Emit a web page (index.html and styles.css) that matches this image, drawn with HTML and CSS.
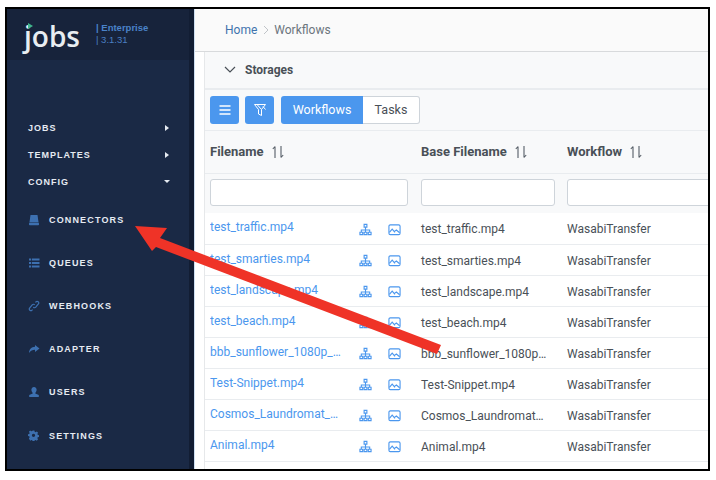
FILE: index.html
```html
<!DOCTYPE html>
<html lang="en">
<head>
<meta charset="utf-8">
<title>Workflows</title>
<link rel="stylesheet" href="styles.css">
</head>
<body>
<div class="frame">
  <aside class="sidebar">
    <div class="brand">
      <div class="logo"><span class="logo-mark"></span>jobs</div>
      <div class="edition"><div class="ed-name">| Enterprise</div><div class="ed-ver">| 3.1.31</div></div>
    </div>
    <nav class="nav">
      <div class="group"><span>JOBS</span><i class="caret-r"></i></div>
      <div class="group"><span>TEMPLATES</span><i class="caret-r"></i></div>
      <div class="group"><span>CONFIG</span><i class="caret-d"></i></div>
      <div class="subs">
        <div class="sub"><svg class="sicon" viewBox="0 0 12 12"><path d="M2.500 1h7l1 7h-9z"/><rect x="1" y="8.600" width="10" height="2.600" rx=".8"/></svg><span>CONNECTORS</span></div>
        <div class="sub"><svg class="sicon" viewBox="0 0 12 12"><path d="M1 1.500h2.200v2H1zM4 1.500h7.500v2H4zM1 5h2.200v2H1zM4 5h7.500v2H4zM1 8.500h2.200v2H1zM4 8.500h7.500v2H4z"/></svg><span>QUEUES</span></div>
        <div class="sub"><svg class="sicon line" viewBox="0 0 12 12"><path d="M4.500 9.500 4 10.200a1.600 1.600 0 0 1-2.400-2.100L4.200 4.800a1.600 1.600 0 0 1 2.500.1M7.500 2.500 8 1.800a1.600 1.600 0 0 1 2.400 2.100L7.800 7.200a1.600 1.600 0 0 1-2.500-.1"/></svg><span>WEBHOOKS</span></div>
        <div class="sub"><svg class="sicon" viewBox="0 0 12 12"><path d="M7 2l4.500 3.500L7 9V6.800C4.500 6.800 2.500 7.500 1 10c.2-3.800 2.500-6 6-6.200z"/></svg><span>ADAPTER</span></div>
        <div class="sub"><svg class="sicon" viewBox="0 0 12 12"><path d="M6 1a2.600 2.600 0 0 1 2.600 3c-.2 1.400-.8 2.400-1.300 2.800v.8l3.500 1.500V11H1.200V9.100l3.500-1.500v-.8C4.200 6.400 3.600 5.400 3.400 4A2.600 2.600 0 0 1 6 1z"/></svg><span>USERS</span></div>
        <div class="sub"><svg class="sicon gear" viewBox="0 0 12 12"><path fill-rule="evenodd" d="M5 .5h2l.3 1.500 1 .4 1.300-.8L11 3l-.8 1.300.4 1 1.400.3v2l-1.400.3-.4 1 .8 1.300-1.400 1.400-1.300-.8-1 .4-.3 1.300H5l-.3-1.300-1-.4-1.300.8L1 9.200l.8-1.300-.4-1L0 6.600v-2l1.400-.3.4-1L1 2 2.400.6l1.300.8 1-.4zM6 4a1.800 1.800 0 1 0 0 3.600A1.800 1.800 0 0 0 6 4z"/></svg><span>SETTINGS</span></div>
      </div>
    </nav>
  </aside>
  <main class="main">
    <div class="crumbs"><a class="crumb-link">Home</a><svg class="crumb-sep" viewBox="0 0 6 10"><path d="M1 1l4 4-4 4"/></svg><span>Workflows</span></div>
    <div class="content">
      <div class="panel"><svg class="chev" viewBox="0 0 12 8"><path d="M1 1l5 5 5-5"/></svg><span>Storages</span></div>
      <div class="toolbar">
        <button class="btn"><svg class="bicon" viewBox="0 0 14 14"><path d="M1.500 3h11M1.500 7h11M1.500 11h11"/></svg></button>
        <button class="btn"><svg class="bicon thin" viewBox="0 0 14 14"><path d="M1.500 1.500h11L8.500 6.500V12.500L5.500 11V6.500zM4 1.500l4.500 5M10 3.500l2.500 3"/></svg></button>
        <div class="seg"><span class="seg-on">Workflows</span><span class="seg-off">Tasks</span></div>
      </div>
      <table class="grid">
        <colgroup><col class="c1"><col class="c2"><col class="c3"></colgroup>
        <thead>
          <tr class="head">
            <th>Filename<svg class="sort" viewBox="0 0 14 14"><path d="M4 13V1.500M4 1.500 1.800 4M10 1v11.500M10 12.500 12.200 10"/></svg></th>
            <th>Base Filename<svg class="sort" viewBox="0 0 14 14"><path d="M4 13V1.500M4 1.500 1.800 4M10 1v11.500M10 12.500 12.200 10"/></svg></th>
            <th>Workflow<svg class="sort" viewBox="0 0 14 14"><path d="M4 13V1.500M4 1.500 1.800 4M10 1v11.500M10 12.500 12.200 10"/></svg></th>
          </tr>
          <tr class="filters">
            <th><input class="finput" aria-label="Filename"></th>
            <th><input class="finput" aria-label="Base Filename"></th>
            <th><input class="finput wide" aria-label="Workflow"></th>
          </tr>
        </thead>
        <tbody id="rows"></tbody>
      </table>
    </div>
  </main>
  <svg class="arrow" viewBox="0 0 716 480"><path d="M135 226 167 228 160 238 441 345 437 354 156 247 152 251z"/></svg>
</div>
<template id="row">
  <tr>
    <td><div class="fcell"><a class="flink"></a><svg class="ticon" viewBox="0 0 14 14"><path d="M5.500 1.500h3v3h-3zM7 4.500v3M2.500 10V7.500h9V10M7 7.500V10M1 10h3v2.500H1zM5.500 10h3v2.500h-3zM10 10h3v2.500h-3z"/></svg><svg class="ticon gap" viewBox="0 0 14 14"><rect x="1" y="2" width="12" height="10.500" rx="1.500"/><path d="M1.500 10l3-3.500 3 3.500M7 9l2-1.500 3.500 3"/></svg></div></td>
    <td class="base"></td>
    <td class="wf">WasabiTransfer</td>
  </tr>
</template>
<script src="rows.js"></script>
</body>
</html>
```
FILE: rows.js
```js
var data = [
  "test_traffic.mp4",
  "test_smarties.mp4",
  "test_landscape.mp4",
  "test_beach.mp4",
  "bbb_sunflower_1080p_H264.mp4",
  "Test-Snippet.mp4",
  "Cosmos_Laundromat_WEB.mp4",
  "Animal.mp4"
];
var body = document.getElementById("rows");
var tpl = document.getElementById("row");
data.forEach(function (name) {
  var r = tpl.content.cloneNode(true);
  r.querySelector(".flink").textContent = name;
  r.querySelector(".base").textContent = name;
  body.appendChild(r);
});
```
FILE: styles.css
```css
* { box-sizing: border-box; }
html, body { margin: 0; height: 100%; background: #fff; overflow: hidden; }
body { padding: 7px 6px 9px 5px; font-family: "Liberation Sans", Arial, sans-serif; }
.frame { position: relative; display: flex; width: 705px; height: 464px; border: 2px solid #000; overflow: hidden; background: #fff; }
.sidebar { width: 187px; flex: none; background: #1a2945; border-right: 5px solid #121d33; }
.brand { height: 51px; background: #17233b; display: flex; padding: 11px 0 0 17px; }
.logo { position: relative; color: #e8edf1; font: 600 28px/32px "Open Sans", sans-serif; width: 72px; }
.logo-mark { position: absolute; left: 4px; top: 3px; width: 0; height: 0; border-left: 5px solid #3fb58c; border-top: 3.500px solid transparent; border-bottom: 3.500px solid transparent; }
.edition { font-size: 9.500px; line-height: 12px; color: #4a7fc4; padding-top: 2px; }
.ed-name { font-weight: 700; color: #4a82c9; }
.nav { padding: 0 0 0 21px; color: #e6ebf2; font-size: 9px; font-weight: 700; letter-spacing: 1px; }
.group { height: 27px; display: flex; align-items: center; justify-content: space-between; padding-right: 20px; }
.group:first-child { margin-top: 54px; }
.caret-r { width: 0; height: 0; border-left: 4px solid #e6ebf2; border-top: 3px solid transparent; border-bottom: 3px solid transparent; }
.caret-d { width: 0; height: 0; border-top: 3px solid #e6ebf2; border-left: 3.500px solid transparent; border-right: 3.500px solid transparent; margin-right: -1px; }
.subs { padding-top: 3px; }
.sub { height: 43.200px; display: flex; align-items: center; gap: 9px; }
.sub span { font-size: 9px; letter-spacing: 1.150px; }
.sicon { width: 12px; height: 12px; flex: none; fill: #3d70b0; }
.sicon.line { fill: none; stroke: #3d70b0; stroke-width: 1.200; }
.sicon.gear { width: 11px; height: 11px; margin-right: 1px; }
.main { flex: 1; min-width: 0; display: flex; flex-direction: column; background: #fff; border-left: 1px solid #cfe0f2; }
.crumbs { height: 43px; flex: none; background: #fafafa; border-bottom: 1px solid #d8dadc; display: flex; align-items: center; padding-left: 30px; font: 400 12px "Roboto", sans-serif; color: #6c757d; }
.crumb-link { color: #3f73ad; }
.crumb-sep { width: 6px; height: 10px; margin: 0 5px 0 6px; fill: none; stroke: #c0c4c8; }
.content { margin-left: 9px; border-left: 1px solid #e6e8ea; flex: 1; min-height: 0; }
.panel { height: 38px; background: #f8f9fa; border-bottom: 2px solid #e9ecef; display: flex; align-items: center; padding-left: 19px; gap: 9px; font: 700 12px "Roboto", sans-serif; color: #495057; }
.chev { width: 12px; height: 8px; fill: none; stroke: #495057; stroke-width: 1.200; }
.toolbar { height: 41px; padding: 6px 0 0 5px; display: flex; align-items: flex-start; gap: 6px; background: #f8f9fa; border-bottom: 1px solid #e9ecef; }
.btn { width: 29px; height: 28px; padding: 0; background: #4b97ee; border: 0; border-radius: 3px; display: flex; align-items: center; justify-content: center; }
.bicon { width: 14px; height: 14px; fill: none; stroke: #fff; stroke-width: 1.300; }
.bicon.thin { stroke-width: 1; }
.seg { display: flex; height: 28px; margin-left: 1px; font: 400 12.500px/26px "Roboto", sans-serif; }
.seg-on { width: 82px; text-align: center; background: #4b97ee; color: #fff; border-radius: 3px 0 0 3px; line-height: 28px; }
.seg-off { width: 57px; text-align: center; background: #fff; color: #495057; border: 1px solid #ced4da; border-left: 0; border-radius: 0 3px 3px 0; }
.grid { border-collapse: collapse; table-layout: fixed; width: 620px; font: 400 12px "Roboto", sans-serif; color: #495057; }
.c1 { width: 211px; }
.c2 { width: 146px; }
.c3 { width: 263px; }
.head th { height: 42px; background: #f8f9fa; border-bottom: 1px solid #e9ecef; text-align: left; padding: 0 0 0 5px; font-size: 13px; font-weight: 700; color: #495057; }
.sort { width: 14px; height: 14px; margin-left: 7px; vertical-align: -3px; fill: none; stroke: #555d66; stroke-width: 1.100; }
.filters th { height: 40px; background: #f8f9fa; padding: 0 0 1px 5px; }
.finput { display: block; width: 134px; height: 27px; border: 1px solid #ced4da; border-radius: 3px; background: #fff; padding: 0; }
.filters th:first-child .finput { width: 198px; }
.finput.wide { width: 160px; }
.grid td { height: 31px; padding: 2px 0 0 5px; border-bottom: 1px solid #e9ecef; background: #fff; white-space: nowrap; overflow: hidden; text-overflow: ellipsis; }
.grid td.base { padding-right: 14px; }
.fcell { display: flex; align-items: center; }
.flink { width: 137px; flex: none; color: #4b97ee; overflow: hidden; text-overflow: ellipsis; position: relative; top: -2px; }
.ticon { width: 13px; height: 13px; flex: none; margin-left: 12px; fill: none; stroke: #4b97ee; stroke-width: 1.200; }
.ticon.gap { margin-left: 16px; }
.arrow { position: absolute; left: -7px; top: -9px; width: 716px; height: 480px; fill: #ef3327; pointer-events: none; }
```
